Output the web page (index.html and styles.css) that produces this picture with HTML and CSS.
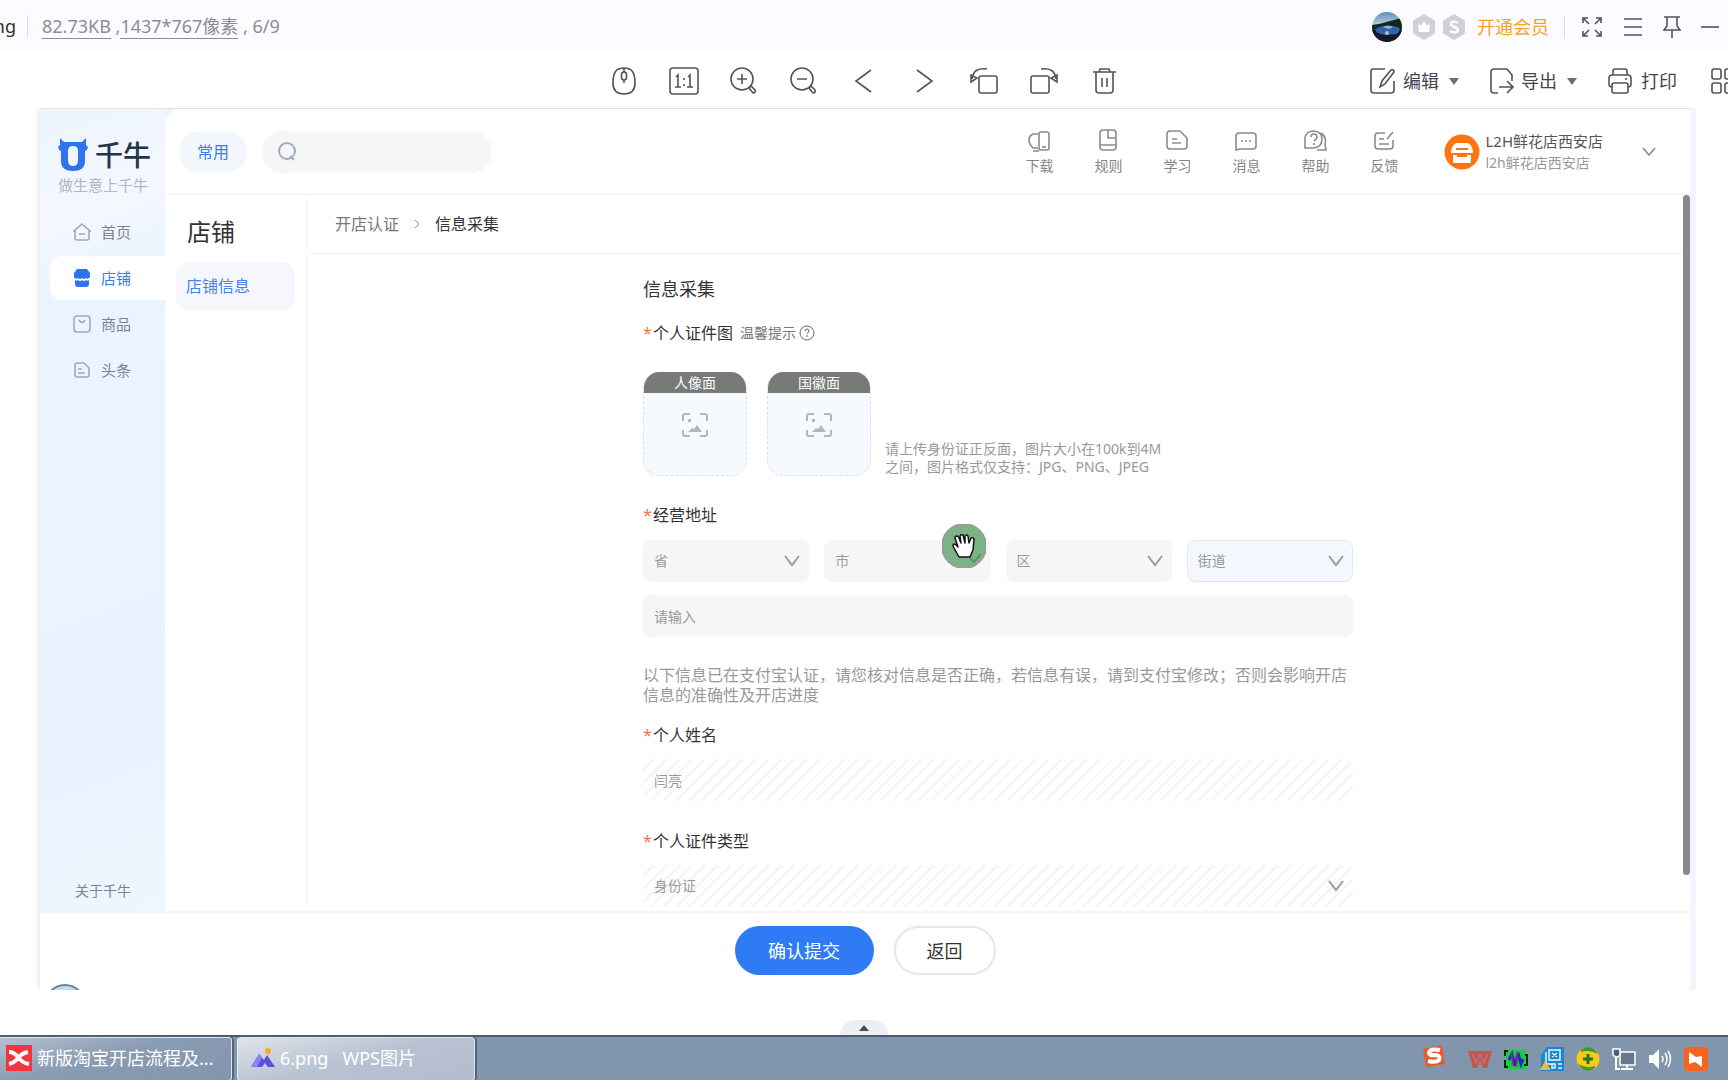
FILE: index.html
```html
<!DOCTYPE html>
<html lang="zh-CN">
<head>
<meta charset="utf-8">
<title>6.png - WPS图片</title>
<link rel="stylesheet" href="styles.css">
</head>
<body>
<header class="titlebar">
  <span class="file-name">ng</span>
  <span class="divider"></span>
  <p class="file-info"><a href="#">82.73KB</a> ,<a href="#">1437*767像素</a>&nbsp;, 6/9</p>
  <div class="title-tools">
    <svg class="user-photo" width="30" height="30" viewBox="0 0 30 30"><defs><clipPath id="round"><circle cx="15" cy="15" r="15"/></clipPath><linearGradient id="sky" x2="0" y2="1"><stop stop-color="#5b8fb8"/><stop offset="1" stop-color="#bcd6e2"/></linearGradient></defs><g clip-path="url(#round)"><path fill="url(#sky)" d="M0 0h30v14H0z"/><path fill="#12281f" d="M0 13C9 12 17 9 30 6v24H0z"/><path fill="#101a2a" d="M0 18h30v12H0z"/><path fill="#3563a8" d="M3 17c6-3 10-4 16-3 5 0 8 1 9 4l-3 4-12 1C8 22 4 21 3 17z"/><path fill="#8db2dd" d="M11 15c4-2 8-1 10 0l-4 2z"/><circle cx="15" cy="21" r="2" fill="#a9bdd2"/></g></svg>
    <svg width="22" height="26" viewBox="0 0 22 26"><path fill="#cfcfd4" d="M11 0l10 6q1 0 1 2v10q0 2-1 2l-10 6-10-6q-1 0-1-2V8q0-2 1-2z"/><path fill="#fff" d="M5 9l3 3 3-5 3 5 3-3-1 9H6z"/></svg>
    <svg width="22" height="26" viewBox="0 0 22 26"><path fill="#cfcfd4" d="M11 0l10 6q1 0 1 2v10q0 2-1 2l-10 6-10-6q-1 0-1-2V8q0-2 1-2z"/><path fill="none" stroke="#fff" stroke-width="2.4" d="M15 9c-2-2-7-2-7 1 0 4 7 2 7 6 0 3-5 3-8 1"/></svg>
    <a class="vip" href="#">开通会员</a>
    <span class="divider"></span>
    <button aria-label="全屏"><svg class="line" width="22" height="22" viewBox="0 0 22 22"><path d="M8 8L2 2M2 7V2h5M14 8l6-6M15 2h5v5M8 14l-6 6M2 15v5h5M14 14l6 6M20 15v5h-5"/></svg></button>
    <button aria-label="菜单"><svg class="line" width="20" height="20" viewBox="0 0 20 20"><path d="M1 2h18M1 10h18M1 18h18"/></svg></button>
    <button aria-label="置顶"><svg class="line" width="18" height="22" viewBox="0 0 18 22"><path d="M1 1h16M4 1v9l-3 4h16l-3-4V1M9 14v8"/></svg></button>
    <button aria-label="最小化"><svg class="line" width="18" height="20" viewBox="0 0 18 20"><path d="M0 10h18"/></svg></button>
  </div>
</header>

<div class="toolbar">
  <div class="view-tools">
    <button aria-label="鼠标"><svg class="line" width="28" height="28" viewBox="0 0 28 28"><path d="M14 1c-7 0-11 3-11 15 0 8 4 11 11 11s11-3 11-11C25 4 21 1 14 1zM14 1v4M14 13v3"/><rect x="11.500" y="5" width="5" height="8" rx="2.500"/></svg></button>
    <button aria-label="原始大小"><svg class="line" width="30" height="28" viewBox="0 0 30 28"><rect x="1" y="1" width="28" height="26" rx="3"/><path d="M7 10l2-2v12M6 20h6M19 10l2-2v12M18 20h6M15 11v2M15 17v2"/></svg></button>
    <button aria-label="放大"><svg class="line" width="28" height="28" viewBox="0 0 28 28"><circle cx="12" cy="12" r="11"/><path d="M7 12h10M12 7v10M19 21l2-2 4 4q1 3-2 3z"/></svg></button>
    <button aria-label="缩小"><svg class="line" width="28" height="28" viewBox="0 0 28 28"><circle cx="12" cy="12" r="11"/><path d="M7 12h10M19 21l2-2 4 4q1 3-2 3z"/></svg></button>
    <button aria-label="上一张"><svg class="line" width="28" height="28" viewBox="0 0 28 28"><path d="M21 3L6 14l15 11"/></svg></button>
    <button aria-label="下一张"><svg class="line" width="28" height="28" viewBox="0 0 28 28"><path d="M7 3l15 11L7 25"/></svg></button>
    <button aria-label="向左旋转"><svg class="line" width="28" height="28" viewBox="0 0 28 28"><rect x="9" y="9" width="18" height="17" rx="2"/><path d="M17 2C9 1 3 3 2 12M1 8v7l6-4z"/></svg></button>
    <button aria-label="向右旋转"><svg class="line" width="28" height="28" viewBox="0 0 28 28"><rect x="1" y="9" width="18" height="17" rx="2"/><path d="M11 2c8-1 14 1 15 10M27 8v7l-6-4z"/></svg></button>
    <button aria-label="删除"><svg class="line" width="28" height="28" viewBox="0 0 28 28"><path d="M3 5h23M9 5l1-3h9l1 3M6 5v18q0 3 3 3h11q3 0 3-3V5M12 11v9M17 11v9"/></svg></button>
  </div>
  <div class="file-tools">
    <button class="edit"><svg class="line" width="28" height="28" viewBox="0 0 28 28"><path d="M17 2H5Q3 2 3 4v19q0 3 3 3h17q3 0 3-3v-9M12 20l2-6L23 3q3-1 3 2L17 17z"/></svg>编辑<i class="caret"></i></button>
    <button class="export"><svg class="line" width="24" height="28" viewBox="0 0 24 28"><path d="M8 26H4q-3 0-3-3V5q0-3 3-3h13l5 6v6M9 20h14M17 14l6 6-6 6"/></svg>导出<i class="caret"></i></button>
    <button class="print"><svg class="line" width="24" height="28" viewBox="0 0 24 28"><path d="M5 8V4q0-2 2-2h10q2 0 2 2v4M4 20q-3 0-3-3v-6q0-3 3-3h16q3 0 3 3v6q0 3-3 3M17 12h2"/><rect x="4" y="16" width="16" height="10" rx="2"/></svg>打印</button>
    <button aria-label="更多"><svg class="line" width="17" height="28" viewBox="0 0 17 28"><rect x="1" y="2" width="9" height="10" rx="2"/><rect x="1" y="16" width="9" height="10" rx="2"/><rect x="14" y="2" width="9" height="10" rx="2"/><rect x="14" y="16" width="9" height="10" rx="2"/></svg></button>
  </div>
</div>

<main class="picture">
  <div class="workspace">
    <aside class="sidebar">
      <div class="brand">
        <svg width="30" height="34" viewBox="0 0 30 34"><path fill="#2f74ee" fill-rule="evenodd" d="M2 0l4 4h18l4-4v7l2 2-1 3-2 1v10q0 10-12 10Q3 33 3 23V13l-2-1-1-3 2-2zM15 8q-5 0-5 5v9q0 6 5 6t5-6v-9q0-5-5-5z"/></svg>
        <strong>千牛</strong>
      </div>
      <p class="slogan">做生意上千牛</p>
      <nav class="side-nav">
        <a href="#"><svg class="soft" width="18" height="18" viewBox="0 0 18 18"><path d="M9 1l8 7h-1v7q0 2-2 2H4q-2 0-2-2V8H1zM6 11h6"/></svg>首页</a>
        <a class="active" href="#"><svg width="18" height="18" viewBox="0 0 18 18"><path fill="#2f74ee" d="M4 0h10l3 4v4q-2 3-4 1-2 2-4 0-2 2-4 0-3 2-4-1V4zM2 11q2 1 3 0 2 2 4 0 2 2 4 0 1 1 3 0v4q0 3-3 3H5q-3 0-3-3z"/></svg>店铺</a>
        <a href="#"><svg class="soft" width="18" height="18" viewBox="0 0 18 18"><rect x="1" y="1" width="16" height="16" rx="3"/><path d="M6 5q3 5 6 0"/></svg>商品</a>
        <a href="#"><svg class="soft" width="18" height="18" viewBox="0 0 18 18"><path d="M4 2h7l5 5v7q0 2-2 2H4q-2 0-2-2V4q0-2 2-2zM5 8h4M5 12h7"/></svg>头条</a>
      </nav>
      <a class="about" href="#">关于千牛</a>
    </aside>

    <section class="shop">
      <header class="shop-top">
        <button class="common">常用</button>
        <label class="search"><svg class="search-icon" width="18" height="20" viewBox="0 0 18 20"><circle cx="9" cy="9" r="8"/><path d="M12 14l4 4"/></svg><input type="search" aria-label="搜索"></label>
        <nav class="quick">
          <a href="#"><svg class="gray" width="24" height="24" viewBox="0 0 24 24"><path d="M11 5H6Q2 7 2 11t4 8h5M6 22h6"/><rect x="12" y="3" width="10" height="18" rx="2"/><path d="M15 18h4"/></svg>下载</a>
          <a href="#"><svg class="gray" width="24" height="24" viewBox="0 0 24 24"><rect x="4" y="1" width="16" height="20" rx="3"/><path d="M4 16h16M12 1v8h8"/></svg>规则</a>
          <a href="#"><svg class="gray" width="24" height="24" viewBox="0 0 24 24"><path d="M5 2h10l7 7v8q0 3-3 3H5q-3 0-3-3V5q0-3 3-3zM7 10h5M7 14h9"/></svg>学习</a>
          <a href="#"><svg class="gray" width="24" height="24" viewBox="0 0 24 24"><path d="M5 4h14q3 0 3 3v10q0 3-3 3H6l-4 1V7q0-3 3-3zM7 12h2M11 12h2M15 12h2"/></svg>消息</a>
          <a href="#"><svg class="gray" width="24" height="24" viewBox="0 0 24 24"><path d="M2 18V9q1-7 9-7 8 1 8 8 0 8-8 9H2zM18 4q6 4 4 11l1 6h-9M8 8q0-3 3-3t3 3q0 2-3 4M11 14v2"/></svg>帮助</a>
          <a href="#"><svg class="gray" width="24" height="24" viewBox="0 0 24 24"><path d="M13 4H6Q3 4 3 7v10q0 3 3 3h12q3 0 3-3v-6M7 10h5M7 15h10M15 10l6-7"/></svg>反馈</a>
        </nav>
        <div class="account">
          <svg width="36" height="36" viewBox="0 0 36 36"><circle cx="18" cy="18" r="17.500" fill="#ff7410"/><path fill="#fff" d="M12 9h12q5 3 5 10H7q0-7 5-10zM9 21h18v7q0 1-1 1H10q-1 0-1-1z"/><path stroke="#ff7410" stroke-width="2" d="M12 15h12M13 22h10"/></svg>
          <p>L2H鲜花店西安店<small>l2h鲜花店西安店</small></p>
          <svg class="gray" width="14" height="10" viewBox="0 0 14 10"><path d="M1 1l6 7 6-7"/></svg>
        </div>
      </header>
      <div class="shop-main">
        <nav class="sub-nav">
          <h2>店铺</h2>
          <a href="#">店铺信息</a>
        </nav>
        <div class="content">
          <nav class="crumbs"><a href="#">开店认证</a><svg class="gray" width="6" height="8" viewBox="0 0 6 8"><path d="M1 0l4 4-4 4"/></svg><span>信息采集</span></nav>
          <form class="form" id="collect">
            <h1>信息采集</h1>
            <p class="label"><i>*</i>个人证件图<span class="tip">温馨提示</span><svg class="help" width="16" height="16" viewBox="0 0 16 16"><circle cx="8" cy="8" r="7"/><path d="M6 6q0-2 2-2t2 2q0 1-2 3M8 10v2"/></svg></p>
            <div class="uploads">
              <button type="button" class="upload"><span>人像面</span><svg class="scan" width="26" height="24" viewBox="0 0 26 24"><path d="M1 8V3q0-2 2-2h5M18 1h5q2 0 2 2v5M1 17v4q0 2 2 2h5M18 23h5q2 0 2-2v-4"/><path class="fill" d="M6 19l4-4 2 1 3-4 5 7zM6 6h3v3H6z"/></svg></button>
              <button type="button" class="upload"><span>国徽面</span><svg class="scan" width="26" height="24" viewBox="0 0 26 24"><path d="M1 8V3q0-2 2-2h5M18 1h5q2 0 2 2v5M1 17v4q0 2 2 2h5M18 23h5q2 0 2-2v-4"/><path class="fill" d="M6 19l4-4 2 1 3-4 5 7zM6 6h3v3H6z"/></svg></button>
              <p>请上传身份证正反面，图片大小在100k到4M<br>之间，图片格式仅支持：JPG、PNG、JPEG</p>
            </div>
            <label class="label" for="province"><i>*</i>经营地址</label>
            <div class="address">
              <div class="select"><select id="province"><option>省</option></select><svg viewBox="0 0 16 12" width="16" height="12"><path d="M1 1l7 9 7-9"/></svg></div>
              <div class="select"><select aria-label="市"><option>市</option></select><svg viewBox="0 0 16 12" width="16" height="12"><path d="M1 1l7 9 7-9"/></svg>
                <svg class="pointer" width="44" height="44" viewBox="0 0 44 44"><circle cx="22" cy="22" r="22" fill="#7ab484"/><path d="M28 34l4 4 7-8" fill="none" stroke="#5b9469" stroke-width="2"/><path fill="#fff" stroke="#111" stroke-width="1.500" stroke-linejoin="round" d="M17 33l-5-9q-2-3 0-4 2 0 4 3l-3-9q0-2 2-2 1 0 2 2l2 5-1-7q1-2 3-1l2 8v-7q2-2 3 0l1 7 2-5q2-1 3 1l-1 11-3 7z"/></svg>
              </div>
              <div class="select"><select aria-label="区"><option>区</option></select><svg viewBox="0 0 16 12" width="16" height="12"><path d="M1 1l7 9 7-9"/></svg></div>
              <div class="select focus"><select aria-label="街道"><option>街道</option></select><svg viewBox="0 0 16 12" width="16" height="12"><path d="M1 1l7 9 7-9"/></svg></div>
              <input class="field street" type="text" placeholder="请输入" aria-label="详细地址">
            </div>
            <p class="note">以下信息已在支付宝认证，请您核对信息是否正确，若信息有误，请到支付宝修改；否则会影响开店信息的准确性及开店进度</p>
            <label class="label" for="name"><i>*</i>个人姓名</label>
            <input class="field striped" id="name" type="text" value="闫亮" readonly>
            <label class="label type-label" for="card"><i>*</i>个人证件类型</label>
            <div class="select striped"><select id="card"><option>身份证</option></select><svg viewBox="0 0 16 12" width="16" height="12"><path d="M1 1l7 9 7-9"/></svg></div>
          </form>
        </div>
        <div class="scroll-thumb"></div>
      </div>
    </section>
  </div>
  <footer class="actions">
    <button class="primary" form="collect">确认提交</button>
    <button class="back">返回</button>
    <svg class="badge" width="30" height="6" viewBox="0 0 30 6"><circle cx="15" cy="21" r="20" fill="#c3dbe9" stroke="#5f87a5" stroke-width="2"/></svg>
  </footer>
</main>

<div class="drawer"><button aria-label="展开"><svg width="10" height="6" viewBox="0 0 10 6"><path fill="#4a4f5c" d="M5 0l5 6H0z"/></svg></button></div>

<footer class="taskbar">
  <button class="task"><svg width="26" height="26" viewBox="0 0 26 26"><path fill="#f0373f" d="M0 0h26v26H0z"/><path fill="none" stroke="#fff" stroke-width="4" d="M3 7q5 0 9 5 4 6 11 7M3 19q5-1 9-6 4-5 10-6"/></svg>新版淘宝开店流程及...</button>
  <button class="task current"><svg width="24" height="20" viewBox="0 0 24 20"><path fill="#5a50dc" d="M0 19L8 6l5 6 3-5 8 12h-7l-3-4-3 4z"/><path fill="#8f80f5" d="M0 19L8 6l3 4-5 9z"/><circle cx="17" cy="3" r="3" fill="#f7a928"/></svg><span>6.png</span><span class="app">WPS图片</span></button>
  <div class="tray">
    <svg class="ime" width="24" height="24" viewBox="0 0 24 24"><path fill="#eb5a28" d="M1 5L20 1l3 19-19 3z"/><path fill="none" stroke="#fff" stroke-width="4" d="M18 6Q8 4 7 9q1 3 7 2 5 1 3 5-3 3-11 1"/></svg>
    <svg width="24" height="24" viewBox="0 0 24 24"><path fill="#c9544c" d="M0 4h24l-5 17h-4l-3-7-3 7H5z"/><path fill="none" stroke="#a08a98" d="M5 7l3 9 4-9 4 9 3-9"/></svg>
    <svg width="24" height="24" viewBox="0 0 24 24"><path fill="#16cf3d" d="M2 3h20v19H2z"/><path fill="none" stroke="#102018" stroke-width="2" d="M4 4H1v5M1 13v7h3M21 8h2v10h-3"/><path fill="none" stroke="#2329c9" stroke-width="3" d="M5 13l3-6 3 12 3-13 3 11 2-5"/><path fill="none" stroke="#c83264" d="M8 5v14M13 4v16"/></svg>
    <svg width="24" height="24" viewBox="0 0 24 24"><path fill="#1787d1" d="M7 0h17v24H1V8z"/><path fill="none" stroke="#e9f5fc" stroke-width="1.500" d="M6 5v12h6M9 3h11v10H9zM12 6l5 4M17 6l-5 4M12 17h3v4h-3zM18 17h4M18 21h4"/><path fill="#f2b843" d="M5 14l6 9H0z"/></svg>
    <svg width="24" height="24" viewBox="0 0 24 24"><circle cx="12" cy="12" r="11.500" fill="#f8c917"/><path fill="#3e9a34" d="M5 3q8-6 14 0l3 4Q13 2 5 5zM19 21q-8 6-14 0l-3-4q9 5 17 2z"/><path stroke="#27752a" stroke-width="3" d="M12 7v10M7 12h10"/></svg>
    <svg width="24" height="24" viewBox="0 0 24 24"><path fill="#65788c" stroke="#fff" stroke-width="1.500" d="M8 5h15v13H8z"/><path fill="none" stroke="#fff" stroke-width="2" d="M4 10v12h4M15 18v3M9 22h12"/><path fill="#50606f" stroke="#fff" stroke-width="1.500" d="M1 2h7v6q-3 4-7 0z"/></svg>
    <svg width="24" height="24" viewBox="0 0 24 24"><path fill="#fff" d="M1 8h4l6-6v20l-6-6H1z"/><path fill="none" stroke="#fff" stroke-width="1.500" d="M14 9q2 3 0 6M17 6q4 6 0 12M20 4q5 8 0 16"/></svg>
    <svg width="24" height="24" viewBox="0 0 24 24"><rect width="24" height="24" rx="4" fill="#f8641b"/><path fill="#fff" d="M5 5l7 5 6-1v11l-7-5-6 2z"/></svg>
  </div>
</footer>
</body>
</html>
```
FILE: styles.css
```css
* { box-sizing: border-box; }
body {
  margin: 0;
  min-height: 100vh;
  display: flex;
  flex-direction: column;
  background: #fff;
  color: #333;
  font: 16px/24px "Noto Sans", "Noto Sans CJK SC", sans-serif;
  overflow-x: hidden;
}
p, h1, h2 { margin: 0; font-weight: 400; }
a { color: inherit; text-decoration: none; }
button { padding: 0; border: 0; background: none; color: inherit; font: inherit; display: flex; align-items: center; justify-content: center; }
svg { display: block; flex: none; }
input, select { font: inherit; color: inherit; border: 0; margin: 0; min-width: 0; appearance: none; background: none; outline: 0; }
.line { fill: none; stroke: #50545d; stroke-width: 1.6; }
.gray { fill: none; stroke: #8a8a8a; stroke-width: 1.6; }
.soft { fill: none; stroke: #a2a8b8; stroke-width: 1.6; }

/* viewer title bar */
.titlebar { height: 50px; display: flex; align-items: center; background: #fcfbff; font-size: 18px; padding-top: 2px; }
.file-name { width: 16px; display: flex; justify-content: flex-end; }
.divider { width: 1px; height: 22px; background: #dcdce0; margin: 0 14px 0 11px; }
.file-info { color: #8b8d94; white-space: nowrap; }
.file-info a { border-bottom: 1px solid #8b8d94; }
.title-tools { margin-left: auto; display: flex; align-items: center; gap: 8px; padding: 2px 9px 0 0; }
.user-photo { margin-right: 3px; }
.vip { color: #f2a32c; margin-left: 4px; }
.title-tools .divider { margin: 0 8px 0 7px; }
.title-tools button + button { margin-left: 12px; }

/* viewer tool bar */
.toolbar { height: 58px; display: grid; grid-template-columns: 1fr auto 1fr; align-items: center; padding-top: 4px; font-size: 18px; color: #42464f; }
.view-tools { grid-column: 2; display: flex; gap: 32px; }
.view-tools button { width: 28px; }
.file-tools { display: flex; justify-content: flex-end; }
.edit svg, .export svg { margin-right: 7px; }
.print svg { margin-right: 9px; }
.edit, .export { margin-right: 31px; }
.print { margin-right: 34px; }
.caret { border: 5px solid transparent; border-top: 7px solid #6c7078; border-bottom: 0; margin-left: 10px; }

/* opened picture */
.picture { flex: 1; display: flex; flex-direction: column; margin: 0 38px 0 40px; border-top: 1px solid #e2e2e6; box-shadow: -5px 0 3px -2px #efeff3, 6px 0 0 #f5f4fb; }
.workspace { flex: 1; display: flex; background: #edf3fe; }
.sidebar { width: 125px; display: flex; flex-direction: column; background: linear-gradient(160deg, #edf5ff 0, #f5f7fe 14%, #e9f4ff 24%, #edf3fe 40%, #eaf2fe 80%, #eef6ff 100%); }
.brand { display: flex; align-items: center; gap: 7px; padding: 28px 0 0 18px; height: 64px; }
.brand strong { font-size: 28px; line-height: 36px; color: #263449; font-weight: 500; }
.slogan { padding-left: 18px; font-size: 15px; color: #b1b7c6; }
.side-nav { display: flex; flex-direction: column; gap: 2px; padding: 13px 0 0 10px; font-size: 15px; color: #7c8398; }
.side-nav a { height: 44px; display: flex; align-items: center; gap: 10px; padding-left: 23px; border-radius: 12px 0 0 12px; }
.side-nav .active { background: #fff; color: #3b7bee; }
.about { margin: auto 0 8px 35px; font-size: 14px; color: #7c8398; }

.shop { flex: 1; min-width: 0; display: flex; flex-direction: column; background: #fff; border-radius: 16px 0 0 0; }
.shop-top { height: 86px; display: flex; align-items: center; padding-left: 14px; border-bottom: 1px solid #f2f2f4; }
.common { width: 68px; height: 42px; border-radius: 21px; background: #f4f6fd; color: #3b7bee; }
.search { flex: 0 1 230px; height: 42px; margin-left: 15px; padding: 0 16px; display: flex; align-items: center; border-radius: 21px; background: #f6f6f6; }
.search input { width: 100%; }
.search-icon { fill: none; stroke: #a0abc8; stroke-width: 2; }
.quick { margin-left: auto; display: flex; gap: 41px; font-size: 14px; line-height: 18px; color: #858585; }
.quick a { width: 28px; display: flex; flex-direction: column; align-items: center; gap: 4px; white-space: nowrap; }
.account { display: flex; align-items: center; margin-left: 46px; padding-right: 34px; font-size: 15px; line-height: 21px; color: #555; }
.account p { margin: 0 39px 0 5px; }
.account small { display: block; font-size: 14px; color: #999; }

.shop-main { flex: 1; display: flex; }
.sub-nav { width: 141px; padding: 19px 11px 0; }
.sub-nav h2 { font-size: 24px; line-height: 36px; padding-left: 11px; }
.sub-nav a { display: flex; align-items: center; height: 48px; margin-top: 12px; padding-left: 10px; border-radius: 12px; background: #f6f7fd; color: #4a82ea; }
.content { flex: 1; min-width: 0; border-left: 1px solid #f6f6f8; margin-right: -6px; }
.crumbs { height: 59px; display: flex; align-items: center; gap: 15px; padding-left: 28px; border-bottom: 1px solid #f1f1f3; color: #777; }
.crumbs .gray { stroke-width: 1; }
.crumbs span { color: #333; }
.scroll-thumb { width: 7px; margin-bottom: 36px; border-radius: 4px; background: #8a8a8a; }

/* collection form */
.form { max-width: 710px; margin: 0 auto; padding: 23px 0 4px; }
.form h1 { font-size: 18px; line-height: 24px; }
.label { display: flex; align-items: center; margin-top: 20px; }
.label i { width: 10px; color: #f0764f; font-style: normal; }
.tip { margin: 0 3px 0 7px; font-size: 14px; color: #777; }
.help { fill: none; stroke: #666; stroke-width: 1; }
.uploads { display: flex; align-items: flex-end; gap: 20px; margin: 27px 0; font-size: 14px; line-height: 18px; }
.upload { width: 104px; height: 104px; flex-direction: column; justify-content: flex-start; border: 1px dashed #dcdfe8; border-top: 0; border-radius: 16px; background: #f6faff; overflow: hidden; }
.upload span { align-self: stretch; height: 21px; line-height: 21px; margin: 0 -1px; background: #787a78; color: #fff; }
.scan { margin-top: 20px; fill: none; stroke: #b4b6ba; stroke-width: 2; }
.scan .fill { fill: #b4b6ba; stroke: none; }
.uploads p { margin-left: -6px; color: #999; white-space: nowrap; }
.address { display: grid; grid-template-columns: repeat(4, 1fr); gap: 13px 15px; margin-top: 13px; font-size: 14px; color: #999; }
.select { position: relative; display: grid; align-items: center; height: 42px; border-radius: 8px; background: #f6f6f6; color: #999; font-size: 14px; }
.select > * { grid-area: 1 / 1; }
.select select { width: 100%; height: 42px; padding: 0 11px; }
.select svg { justify-self: end; margin-right: 9px; fill: none; stroke: #9b9b9b; stroke-width: 2; pointer-events: none; }
.select .pointer { position: absolute; left: 118px; top: -16px; margin: 0; }
.focus { background: #f5f7fe; border: 1px solid #e3e7f3; }
.focus select { height: 40px; padding: 0 10px; }
.focus svg { margin-right: 8px; }
.field { width: 100%; height: 42px; padding: 0 11px; border-radius: 8px; background: #f6f6f6; color: #999; font-size: 14px; display: block; }
.field::placeholder { color: #999; opacity: 1; }
.street { grid-column: 1 / -1; }
.note { margin-top: 28px; line-height: 20px; color: #999; }
.note + .label { margin-top: 18px; }
.striped { margin-top: 12px; background: repeating-linear-gradient(135deg, #fff 0 7px, #f4f4f6 7px 9px); }
.type-label { margin-top: 28px; }

.actions { position: relative; height: 79px; display: flex; align-items: center; justify-content: center; gap: 20px; padding-bottom: 2px; border-top: 2px solid #f4f4f6; background: #fff; font-size: 18px; }
.actions button { height: 49px; border-radius: 25px; }
.primary { width: 139px; background: #2f7bf6; color: #fff; }
.back { width: 102px; border: 2px solid #e6e6e6; }
.badge { position: absolute; left: 10px; bottom: 0; }

.drawer { height: 45px; display: flex; align-items: flex-end; justify-content: center; }
.drawer button { width: 48px; height: 15px; border-radius: 16px 16px 0 0; background: #eeeef5; }

/* desktop task bar */
.taskbar { height: 46px; display: flex; align-items: stretch; gap: 5px; background: #8195ad; border-top: 2px solid #4c5c70; font-size: 18px; color: #fff; }
.task { width: 232px; justify-content: flex-start; gap: 5px; padding: 0 0 2px 6px; border: 1px solid #dce3ec; border-left: 0; border-radius: 0 4px 4px 0; background: linear-gradient(165deg, #b4c0cf, #8a9cb2 45%, #8195ad); box-shadow: 1px 0 0 1px #53647a; white-space: nowrap; }
.current { width: 238px; border-left: 1px solid #e8edf3; border-radius: 4px; padding-left: 13px; background: linear-gradient(165deg, #dfe3ea, #b8c2d1 50%, #b3bdce); }
.app { margin-left: 9px; }
.tray { margin-left: auto; display: flex; align-items: center; gap: 12px; padding-right: 20px; }
.ime { margin: 0 10px 6px 0; }
```
